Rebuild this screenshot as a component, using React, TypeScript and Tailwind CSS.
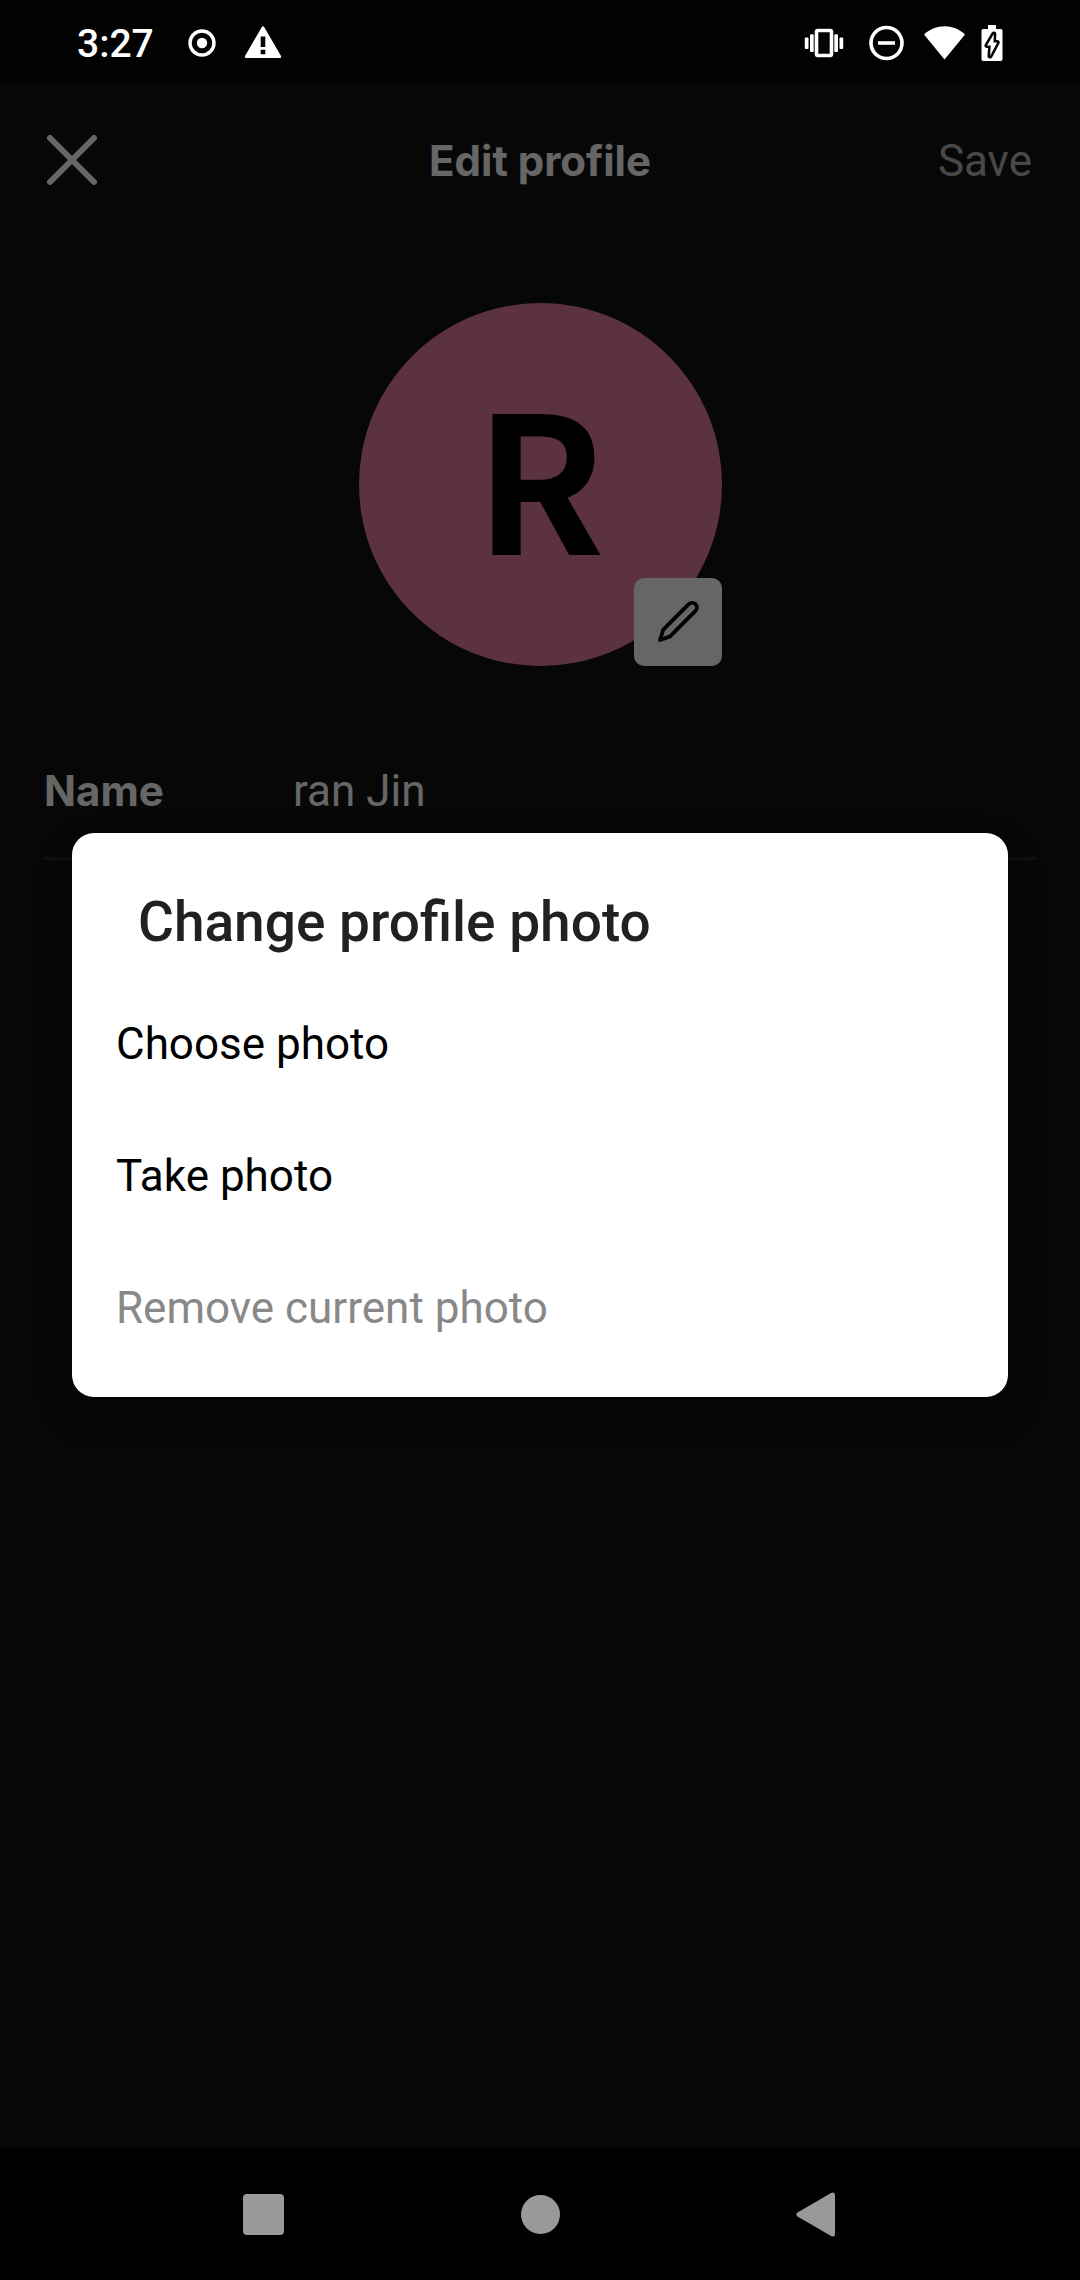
import React, { useState } from "react";

function StatusBar() {
  return (
    <header className="flex h-[83px] items-center justify-between bg-[#020202] px-[77px] pt-0.5 font-['Roboto',sans-serif] text-white">
      <div className="flex items-center gap-7">
        <time className="pt-0.5 pr-1.5 text-[39px] leading-[44px] font-medium">3:27</time>
        <svg width="28" height="28" viewBox="0 0 28 28" aria-hidden="true">
          <circle cx="14" cy="14" r="12" fill="none" stroke="currentColor" strokeWidth="3.4" />
          <circle cx="14" cy="14" r="5.2" fill="currentColor" />
        </svg>
        <svg width="38" height="34" viewBox="0 0 38 34" aria-hidden="true">
          <path
            fill="currentColor"
            fillRule="evenodd"
            d="M17.7 1.2Q19 -.8 20.3 1.2L37 30Q37.6 32 35.8 32H2.2Q.4 32 1 30ZM16.7 10.5V21H21.3V10.5ZM16.7 23.7V28.3H21.3V23.7Z"
          />
        </svg>
      </div>
      <div className="flex items-center gap-4">
        <svg width="50" height="36" viewBox="0 0 50 36" fill="currentColor" aria-hidden="true">
          <rect x="17.5" y="5.5" width="15" height="25" rx="1.5" fill="none" stroke="currentColor" strokeWidth="3.6" />
          <rect x="5.8" y="12.5" width="3.7" height="11.5" rx="1" />
          <rect x="11" y="9.3" width="3.7" height="17.7" rx="1" />
          <rect x="35.3" y="9.3" width="3.7" height="17.7" rx="1" />
          <rect x="40.5" y="12.5" width="3.7" height="11.5" rx="1" />
        </svg>
        <svg width="43" height="36" viewBox="0 0 43 36" aria-hidden="true">
          <circle cx="21.5" cy="18" r="15.5" fill="none" stroke="currentColor" strokeWidth="3.6" />
          <path d="M13 18h17" stroke="currentColor" strokeWidth="3.6" />
        </svg>
        <svg width="41" height="36" viewBox="0 0 41 36" fill="currentColor" aria-hidden="true">
          <path d="M0 9.5C11.5-1.5 29.500-1.5 41 9.5L20.5 34.500Z" />
        </svg>
        <svg width="22" height="36" viewBox="0 0 22 36" fill="currentColor" aria-hidden="true">
          <path d="M7 0H15V4H19.8Q21.5 4 21.5 5.7V34Q21.5 36 19.8 36H2.2Q.5 36 .5 34V5.7Q.5 4 2.2 4H7Z" />
          <path
            d="M12.8 9L6 20.5H9.8L9 31L16.2 17.5H12.500Z"
            stroke="#020202"
            strokeWidth="5"
            strokeLinejoin="round"
            paintOrder="stroke"
          />
        </svg>
      </div>
    </header>
  );
}

function EditProfile() {
  const [name, setName] = useState("ran Jin");
  return (
    <div className="flex flex-col">
      <div className="grid h-[154px] grid-cols-3 items-center px-11">
        <button type="button" aria-label="Close" className="justify-self-start">
          <svg width="56" height="56" viewBox="0 0 56 56" aria-hidden="true">
            <path d="M6 6L50 50M50 6L6 50" stroke="white" strokeWidth="6" strokeLinecap="round" />
          </svg>
        </button>
        <h1 className="pt-0.5 text-center font-['Inter',sans-serif] text-[42px] leading-[52px] font-bold whitespace-nowrap text-white">
          Edit profile
        </h1>
        <button type="button" className="justify-self-end pt-0.5 pr-1 text-[44px] leading-[52px] text-white/70">
          Save
        </button>
      </div>

      <div className="relative mt-[66px] flex size-[363px] items-center justify-center self-center rounded-full bg-[#e67da0]">
        <span className="pb-6 font-['Noto_Sans_CJK_JP',sans-serif] text-[190px] leading-none font-bold text-black">
          R
        </span>
        <button
          type="button"
          aria-label="Change profile photo"
          className="absolute right-0 bottom-0 flex size-[88px] items-center justify-center rounded-[10px] bg-white"
        >
          <svg width="44" height="44" viewBox="0 0 44 44" aria-hidden="true">
            <path
              d="M4 40L6.800 31Q7 30 7.800 29.200L32.800 4.200A4.300 4.300 0 0 1 39.500 10.900L14.600 35.800Q13.800 36.600 12.800 36.900Z"
              fill="none"
              stroke="black"
              strokeWidth="3.8"
              strokeLinejoin="round"
            />
          </svg>
        </button>
      </div>

      <div className="mx-11 mt-[59px] flex h-[135px] items-center border-b-3 border-[#282828]">
        <label htmlFor="name" className="w-[249px] font-['Inter',sans-serif] text-[42px] leading-[52px] font-bold text-white">
          Name
        </label>
        <input
          id="name"
          value={name}
          onChange={(e) => setName(e.target.value)}
          className="min-w-0 flex-1 bg-transparent text-[44px] leading-[52px] text-white outline-none"
        />
      </div>
    </div>
  );
}

const optionClass =
  "flex h-[132px] w-full items-center px-11 text-left text-[44px] leading-[52px] text-black disabled:text-[#888888]";

function PhotoDialog() {
  return (
    <div className="absolute inset-0 flex items-center justify-center bg-black/60 px-[72px] pb-px">
      <div
        role="dialog"
        aria-labelledby="dialog-title"
        className="w-full rounded-[22px] bg-white pt-[57px] pb-[23px] shadow-[0_16px_32px_rgba(0,0,0,0.4)]"
      >
        <h2 id="dialog-title" className="mb-6 px-[66px] text-[55px] leading-16 font-medium text-[#212121]">
          Change profile photo
        </h2>
        <button type="button" className={optionClass}>Choose photo</button>
        <button type="button" className={optionClass}>Take photo</button>
        <button type="button" disabled className={optionClass}>Remove current photo</button>
      </div>
    </div>
  );
}

function NavigationBar() {
  return (
    <nav className="grid h-[132px] grid-cols-3 items-center justify-items-center bg-black px-[126px] pt-0.5 text-[#999999]">
      <button type="button" aria-label="Recent apps">
        <svg width="46" height="46" viewBox="0 0 46 46" fill="currentColor" aria-hidden="true">
          <rect x="2" y="2" width="41" height="41" rx="4" />
        </svg>
      </button>
      <button type="button" aria-label="Home">
        <svg width="46" height="46" viewBox="0 0 46 46" fill="currentColor" aria-hidden="true">
          <circle cx="23.500" cy="22.500" r="19.500" />
        </svg>
      </button>
      <button type="button" aria-label="Back">
        <svg width="46" height="46" viewBox="0 0 46 46" fill="currentColor" aria-hidden="true">
          <path d="M4.500 20.500L38.500 .7Q42 -.5 42 3V42Q42 45.500 38.500 44.300L4.500 24.500Q2 22.500 4.500 20.500Z" />
        </svg>
      </button>
    </nav>
  );
}

export default function App() {
  return (
    <div className="flex min-h-screen flex-col bg-black font-['Roboto',sans-serif]">
      <StatusBar />
      <main className="relative flex-1 bg-[#121212]">
        <EditProfile />
        <PhotoDialog />
      </main>
      <NavigationBar />
    </div>
  );
}
